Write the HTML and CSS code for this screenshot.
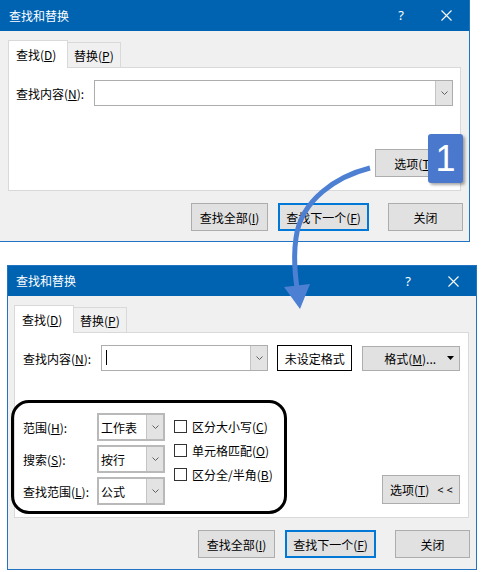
FILE: index.html
```html
<!DOCTYPE html>
<html lang="zh-CN">
<head>
<meta charset="utf-8">
<title>查找和替换</title>
<link rel="stylesheet" href="styles.css">
</head>
<body>
<div class="page">

  <!-- collapsed dialog -->
  <section class="dlg dlg-top">
    <header class="titlebar">
      <span class="title">查找和替换</span>
      <span class="help">?</span>
      <svg class="close" width="11" height="11" viewBox="0 0 11 11"><path d="M0.5 0.5 L10.5 10.5 M10.5 0.5 L0.5 10.5" stroke="#fff" stroke-width="1.1" fill="none"/></svg>
    </header>
    <div class="body">
      <div class="tabs">
        <div class="tab active">查找(<u>D</u>)</div>
        <div class="tab">替换(<u>P</u>)</div>
      </div>
      <div class="panel panel-top">
        <div class="find-row">
          <span class="find-label">查找内容(<u>N</u>):</span>
          <div class="combo combo-wide">
            <span class="combo-btn"><svg width="7" height="4" viewBox="0 0 7 4"><polyline points="0.5,0.5 3.5,3.5 6.5,0.5" fill="none" stroke="#606060" stroke-width="1"/></svg></span>
          </div>
        </div>
        <div class="opt-row">
          <button class="btn btn-opt">选项(<u>T</u>)</button>
        </div>
      </div>
      <div class="actions">
        <button class="btn btn-all">查找全部(<u>I</u>)</button>
        <button class="btn btn-next">查找下一个(<u>F</u>)</button>
        <button class="btn btn-close">关闭</button>
      </div>
    </div>
  </section>

  <!-- expanded dialog -->
  <section class="dlg dlg-bottom">
    <header class="titlebar">
      <span class="title">查找和替换</span>
      <span class="help">?</span>
      <svg class="close" width="11" height="11" viewBox="0 0 11 11"><path d="M0.5 0.5 L10.5 10.5 M10.5 0.5 L0.5 10.5" stroke="#fff" stroke-width="1.1" fill="none"/></svg>
    </header>
    <div class="body">
      <div class="tabs">
        <div class="tab active">查找(<u>D</u>)</div>
        <div class="tab">替换(<u>P</u>)</div>
      </div>
      <div class="panel panel-bottom">
        <div class="find-row">
          <span class="find-label">查找内容(<u>N</u>):</span>
          <div class="combo combo-find">
            <span class="caret"></span>
            <span class="combo-btn"><svg width="7" height="4" viewBox="0 0 7 4"><polyline points="0.5,0.5 3.5,3.5 6.5,0.5" fill="none" stroke="#606060" stroke-width="1"/></svg></span>
          </div>
          <div class="fmt-box">未设定格式</div>
          <button class="btn btn-fmt"><span>格式(<u>M</u>)...</span><svg width="7" height="4" viewBox="0 0 7 4"><polygon points="0,0 7,0 3.5,4" fill="#000"/></svg></button>
        </div>

        <div class="opts">
          <div class="opt-grid">
            <span class="opt-label">范围(<u>H</u>):</span>
            <div class="combo combo-sel"><span class="sel-text">工作表</span><span class="combo-btn"><svg width="7" height="4" viewBox="0 0 7 4"><polyline points="0.5,0.5 3.5,3.5 6.5,0.5" fill="none" stroke="#606060" stroke-width="1"/></svg></span></div>
            <span class="opt-label">搜索(<u>S</u>):</span>
            <div class="combo combo-sel"><span class="sel-text">按行</span><span class="combo-btn"><svg width="7" height="4" viewBox="0 0 7 4"><polyline points="0.5,0.5 3.5,3.5 6.5,0.5" fill="none" stroke="#606060" stroke-width="1"/></svg></span></div>
            <span class="opt-label">查找范围(<u>L</u>):</span>
            <div class="combo combo-sel"><span class="sel-text">公式</span><span class="combo-btn"><svg width="7" height="4" viewBox="0 0 7 4"><polyline points="0.5,0.5 3.5,3.5 6.5,0.5" fill="none" stroke="#606060" stroke-width="1"/></svg></span></div>
          </div>
          <div class="checks">
            <label class="check"><span class="box"></span>区分大小写(<u>C</u>)</label>
            <label class="check"><span class="box"></span>单元格匹配(<u>O</u>)</label>
            <label class="check"><span class="box"></span>区分全/半角(<u>B</u>)</label>
          </div>
          <button class="btn btn-less">选项(<u>T</u>)<span class="less">&lt; &lt;</span></button>
        </div>
      </div>
      <div class="actions">
        <button class="btn btn-all">查找全部(<u>I</u>)</button>
        <button class="btn btn-next">查找下一个(<u>F</u>)</button>
        <button class="btn btn-close">关闭</button>
      </div>
    </div>
  </section>

  <!-- step marker and callouts -->
  <div class="badge">1</div>
  <div class="ring"></div>
  <svg class="arrow" width="482" height="572" viewBox="0 0 482 572">
    <path d="M370 168 C338 176 301 199 296 238 C293 258 295 274 297 288" fill="none" stroke="#4d7fd3" stroke-width="5"/>
    <polygon points="284,287 310,284 300,309" fill="#4d7fd3"/>
  </svg>
</div>
</body>
</html>
```

FILE: styles.css
```css
html, body {
  margin: 0;
  background: #fff;
}

body {
  font-family: "Noto Sans CJK SC", "Noto Sans", sans-serif;
  font-size: 12px;
  color: #000;
}

u {
  text-decoration: underline;
  text-underline-offset: 1px;
}

.page {
  position: relative;
  width: 482px;
  height: 572px;
  overflow: hidden;
}

/* dialog frame */
.dlg {
  box-sizing: border-box;
  background: #f0f0f0;
  display: flex;
  flex-direction: column;
}

.dlg-top {
  width: 470px;
  height: 242px;
  border-right: 1px solid #2373c3;
  border-bottom: 1px solid #2373c3;
}

.dlg-bottom {
  width: 470px;
  height: 305px;
  margin: 23px 0 0 7px;
  border: 1px solid #2373c3;
}

.titlebar {
  flex: none;
  height: 31px;
  background: #0063b1;
  color: #fff;
  display: flex;
  align-items: center;
  padding-left: 9px;
}

.dlg-bottom .titlebar {
  height: 30px;
  padding-left: 8px;
}

.title {
  flex: 1;
  line-height: 1;
}

.help {
  width: 12px;
  margin-right: 34px;
  text-align: center;
  font-family: "Noto Sans", sans-serif;
  font-size: 13px;
  line-height: 1;
}

.close {
  margin-right: 17px;
  display: block;
}

.body {
  flex: 1;
  display: flex;
  flex-direction: column;
  padding: 9px 8px 0 8px;
}

.dlg-bottom .body {
  padding: 9px 7px 0 6px;
}

/* tabs */
.tabs {
  display: flex;
  align-items: flex-end;
  height: 28px;
  margin-bottom: -1px;
  position: relative;
  z-index: 1;
}

.tab {
  box-sizing: border-box;
  border: 1px solid #d9d9d9;
  border-bottom: none;
  display: flex;
  align-items: center;
  width: 53px;
  height: 25px;
  margin-bottom: 1px;
  padding-left: 6px;
  border-left: none;
  background: #f0f0f0;
}

.tab.active {
  width: 60px;
  height: 28px;
  margin-bottom: 0;
  padding-left: 7px;
  border-left: 1px solid #d9d9d9;
  background: #fff;
}

/* tab page */
.panel {
  box-sizing: border-box;
  background: #fff;
  border: 1px solid #d9d9d9;
  display: flex;
  flex-direction: column;
}

.panel-top {
  height: 124px;
  padding: 12px 7px 0 7px;
}

.panel-bottom {
  height: 186px;
  padding: 12px 8px 0 8px;
}

.find-row {
  display: flex;
  align-items: center;
}

.find-label {
  width: 78px;
  flex: none;
}

/* combo boxes */
.combo {
  box-sizing: border-box;
  border: 1px solid #adadad;
  background: #fff;
  display: flex;
  align-items: stretch;
  position: relative;
}

.combo-btn {
  margin-left: auto;
  width: 16px;
  background: #e3e3e3;
  border-left: 1px solid #c4c4c4;
  display: flex;
  align-items: center;
  justify-content: center;
}

.combo-wide {
  width: 360px;
  height: 26px;
}

.combo-find {
  width: 168px;
  height: 26px;
}

.caret {
  position: absolute;
  left: 4px;
  top: 4px;
  width: 1px;
  height: 15px;
  background: #000;
}

.combo-sel {
  width: 68px;
  height: 28px;
  border-color: #b9b9b9;
  border-width: 2px;
}

.sel-text {
  align-self: center;
  padding-left: 2px;
}

.fmt-box {
  box-sizing: border-box;
  width: 75px;
  height: 26px;
  margin-left: 9px;
  border: 1px solid #000;
  display: flex;
  align-items: center;
  justify-content: center;
}

/* buttons */
.btn {
  box-sizing: border-box;
  height: 28px;
  margin: 0;
  padding: 0;
  background: #e1e1e1;
  border: 1px solid #adadad;
  font: inherit;
  color: #000;
  display: flex;
  align-items: center;
  justify-content: center;
}

.btn-fmt {
  width: 98px;
  height: 25px;
  margin-left: 10px;
  justify-content: space-between;
  padding: 0 5px 0 21px;
}

.opt-row {
  margin-top: auto;
  margin-bottom: 13px;
  display: flex;
  justify-content: flex-end;
}

.btn-opt {
  width: 78px;
}

.actions {
  display: flex;
  justify-content: flex-end;
  margin-top: 12px;
  margin-right: -2px;
}

.dlg-bottom .actions {
  margin-right: -1px;
}

.btn-all {
  width: 77px;
}

.btn-next {
  width: 91px;
  margin-left: 10px;
  border: 2px solid #0078d7;
}

.btn-close {
  width: 75px;
  margin-left: 19px;
}

/* expanded options */
.opts {
  margin-top: auto;
  margin-bottom: 12px;
  display: flex;
  align-items: flex-end;
}

.opt-grid {
  display: grid;
  grid-template-columns: 74px 68px;
  row-gap: 4px;
  align-items: center;
}

.checks {
  align-self: flex-start;
  margin-left: 9px;
  padding-top: 7px;
  display: flex;
  flex-direction: column;
  gap: 11px;
}

.check {
  display: flex;
  align-items: center;
  height: 13px;
  white-space: nowrap;
}

.box {
  box-sizing: border-box;
  width: 13px;
  height: 13px;
  border: 1px solid #333;
  background: #fff;
  margin-right: 5px;
  flex: none;
}

.btn-less {
  width: 78px;
  height: 29px;
  margin-left: auto;
  margin-bottom: 1px;
  justify-content: flex-start;
  padding-left: 7px;
}

.less {
  margin-left: 8px;
  font-family: "Noto Sans", sans-serif;
  font-size: 11px;
}

/* callouts drawn over the dialogs */
.badge {
  position: absolute;
  left: 428px;
  top: 134px;
  width: 35px;
  height: 49px;
  background: #4a78cc;
  border-radius: 3px;
  box-shadow: 2px 2px 3px rgba(0, 0, 0, 0.35);
  color: #fff;
  font-family: "Liberation Sans", Arial, sans-serif;
  font-size: 36px;
  line-height: 49px;
  text-align: center;
}

.ring {
  position: absolute;
  left: 11px;
  top: 400px;
  width: 276px;
  height: 114px;
  box-sizing: border-box;
  border: 3px solid #000;
  border-radius: 18px;
}

.arrow {
  position: absolute;
  left: 0;
  top: 0;
  pointer-events: none;
}
```
